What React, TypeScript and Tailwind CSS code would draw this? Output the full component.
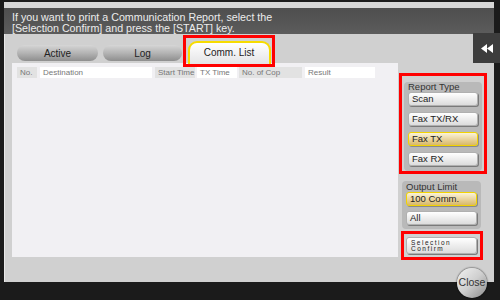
import React from "react";

const font = { fontFamily: '"Liberation Sans", Arial, sans-serif' };

function Btn({ label, sel }: { label: string; sel?: boolean }) {
  return (
    <div
      className={
        "h-[14px] rounded-[3px] flex items-center pl-[3px] text-[9.5px] leading-none text-[#222] " +
        (sel
          ? "border border-[#f2d300] bg-gradient-to-b from-[#fbf3d8] to-[#d8b868] shadow-[1px_1px_0_#8a8a8a]"
          : "border border-[#b0b0b0] bg-gradient-to-b from-[#ffffff] to-[#dcdcdc] shadow-[1px_1px_0_#7a7a7a]")
      }
    >
      {label}
    </div>
  );
}

function Cell({ t, w, gray }: { t: string; w: string; gray?: boolean }) {
  return (
    <div
      className={
        w +
        " h-[11px] flex items-center pl-[3px] text-[8px] leading-none text-[#777] " +
        (gray ? "bg-[#e2e2e2]" : "bg-white")
      }
    >
      {t}
    </div>
  );
}

export default function App() {
  return (
    <div className="w-[500px] h-[300px] bg-[#1b1b1b] relative overflow-hidden pt-[2px] pl-[4px]" style={font}>
      <div className="w-[490px] h-[280px] bg-[#d0d0d0] flex flex-col rounded-tl-[2px] shadow-[inset_1px_0_0_#e8e8e8]">
        <div className="h-[6px] bg-[#d6d6d6]" />
        <div className="h-[26px] bg-gradient-to-b from-[#4e4e4e] to-[#5c5c5c] pl-[8px] pt-[4px] text-[10.7px] leading-[11px] text-[#ececec]">
          <div>If you want to print a Communication Report, select the</div>
          <div>[Selection Confirm] and press the [START] key.</div>
        </div>
        <div className="flex flex-1">
          <div className="ml-[8px] w-[386px] flex flex-col">
            <div className="h-[29px] flex items-end gap-[5px] pl-[5px]">
              <div className="mb-[2px] w-[81px] h-[16px] rounded-full bg-gradient-to-b from-[#d6d6d6] via-[#b4b4b4] to-[#8e8e8e] flex items-center justify-center text-[10px] text-[#222]">
                Active
              </div>
              <div className="mb-[2px] w-[79px] h-[16px] rounded-full bg-gradient-to-b from-[#d6d6d6] via-[#b4b4b4] to-[#8e8e8e] flex items-center justify-center text-[10px] text-[#222]">
                Log
              </div>
              <div className="relative -ml-[4px] w-[92px] h-[32px] -mb-[4px] border-[3px] border-[#ff0000] flex items-start justify-center pt-[3px]">
                <div className="w-[83px] h-[23px] rounded-t-[9px] border-t-[2px] border-x-[2px] border-[#f7dc00] bg-gradient-to-b from-[#ffffff] to-[#e4e4e6] flex justify-center pt-[2px] text-[10px] text-[#222]">
                  Comm. List
                </div>
              </div>
            </div>
            <div className="h-[194px] bg-[#f1f0f3] pt-[4px] pl-[5px]">
              <div className="flex">
                <Cell t="No." w="w-[20px]" gray />
                <div className="w-[3px]" />
                <Cell t="Destination" w="w-[112px]" />
                <div className="w-[3px]" />
                <Cell t="Start Time" w="w-[40px]" gray />
                <div className="w-[2px]" />
                <Cell t="TX Time" w="w-[40px]" />
                <div className="w-[2px]" />
                <Cell t="No. of Cop" w="w-[63px]" gray />
                <div className="w-[3px]" />
                <Cell t="Result" w="w-[70px]" />
              </div>
            </div>
          </div>
          <div className="flex flex-col pt-[39px] ml-[1px]">
            <div className="w-[88px] border-[3px] border-[#ff0000] px-[2px] pt-[6px]">
              <div className="bg-[#b9b9b9] rounded-[4px] px-[4px] pb-[5px] pt-[1px]">
                <div className="text-[9.5px] leading-[8px] h-[9px] text-[#333]">Report Type</div>
                <div className="flex flex-col gap-[6px]">
                  <Btn label="Scan" />
                  <Btn label="Fax TX/RX" />
                  <Btn label="Fax TX" sel />
                  <Btn label="Fax RX" />
                </div>
              </div>
            </div>
            <div className="ml-[3px] mt-[7px] w-[79px] bg-[#b9b9b9] rounded-[4px] px-[4px] pb-[4px] pt-[1px]">
              <div className="text-[9.5px] leading-[10px] h-[10px] text-[#333]">Output Limit</div>
              <div className="flex flex-col gap-[5px]">
                <Btn label="100 Comm." sel />
                <Btn label="All" />
              </div>
            </div>
            <div className="ml-[2px] mt-[2px] w-[82px] h-[29px] border-[3px] border-[#ff0000] flex items-center pl-[2px]">
              <div className="w-[71px] h-[17px] rounded-[3px] border border-[#b0b0b0] bg-gradient-to-b from-[#ffffff] to-[#dcdcdc] shadow-[1px_1px_0_#7a7a7a] pl-[4px] flex flex-col justify-center text-[6.5px] leading-[6px] tracking-[1.5px] text-[#222]">
                <div>Selection</div>
                <div>Confirm</div>
              </div>
            </div>
          </div>
        </div>
      </div>
      <div className="absolute left-[473px] top-[33px] w-[27px] h-[30px] bg-[#3d3d3d] flex items-center justify-center">
        <svg width="12" height="9" viewBox="0 0 12 9">
          <path d="M6 0 L0 4.5 L6 9 Z M12 0 L6 4.5 L12 9 Z" fill="#ffffff" />
        </svg>
      </div>
      <div className="absolute left-[457px] top-[268px] w-[30px] h-[30px] rounded-full bg-gradient-to-br from-[#f2f2f2] via-[#cfcfcf] to-[#8c8c8c] shadow-[0_0_2px_#000] flex items-center justify-center text-[10.5px] text-[#333]">
        Close
      </div>
    </div>
  );
}
